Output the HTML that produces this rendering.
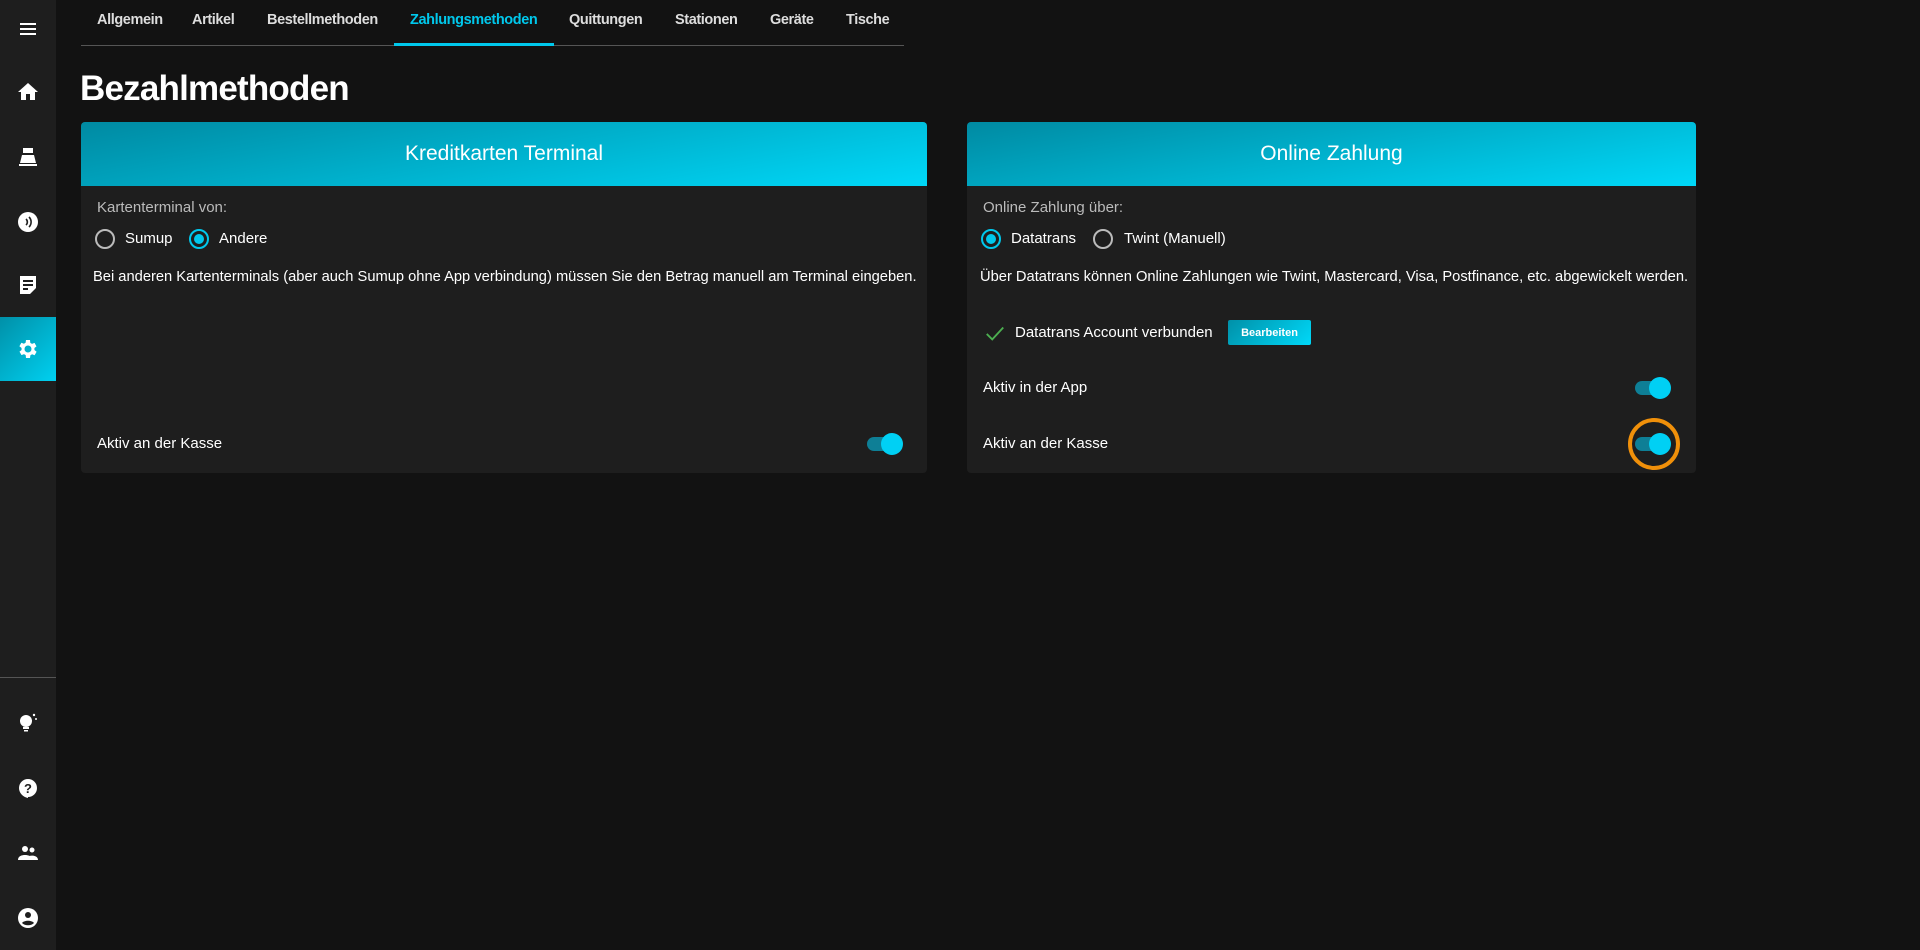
<!DOCTYPE html>
<html><head><meta charset="utf-8"><style>
*{box-sizing:border-box;margin:0;padding:0}
body{width:1920px;height:950px;background:#121212;font-family:"Liberation Sans",sans-serif;color:#fff;position:relative;overflow:hidden}
.side{position:absolute;left:0;top:0;width:56px;height:950px;background:#1e1e1e}
.ic{position:absolute;left:16px;width:24px;height:24px}
.act{position:absolute;left:0;top:317px;width:56px;height:64px;background:linear-gradient(135deg,#0090a8,#00d0f0)}
.div{position:absolute;left:0;top:677px;width:56px;height:1px;background:#555}
.tab{position:absolute;top:12px;font-size:14.5px;font-weight:bold;color:#ddd;letter-spacing:-0.4px}
.tabline{position:absolute;left:81px;top:45px;width:823px;height:1px;background:#555}
.uline{position:absolute;left:394px;top:43px;width:160px;height:3px;background:#00c8ec}
h1{position:absolute;left:80px;top:69px;font-size:35px;font-weight:bold;letter-spacing:-0.8px}
.card{position:absolute;top:122px;height:351px;background:#1e1e1e;border-radius:4px;overflow:hidden}
.hd{height:64px;background:linear-gradient(170deg,#008aa2,#00d8f8);display:flex;align-items:center;justify-content:center;font-size:21px}
.t{position:absolute;font-size:15px;white-space:nowrap}
.g{color:#bbb}
.rad{position:absolute;width:20px;height:20px;border:2px solid #bbb;border-radius:50%}
.rad.on{border-color:#00c8ec}
.rad.on::after{content:"";position:absolute;left:3px;top:3px;width:10px;height:10px;border-radius:50%;background:#00c8ec}
.tg{position:absolute;width:36px;height:22px}
.tg::before{content:"";position:absolute;left:0;top:4px;width:32px;height:14px;border-radius:7px;background:#0e7f96}
.tg::after{content:"";position:absolute;right:0;top:0;width:22px;height:22px;border-radius:50%;background:#00d0f4}
</style></head><body>
<div class="side">
<div class="ic" style="top:17px"><svg width="24" height="24" viewBox="0 0 24 24" fill="#fff"><rect x="4" y="6" width="16" height="2"/><rect x="4" y="11" width="16" height="2"/><rect x="4" y="16" width="16" height="2"/></svg></div>
<div class="ic" style="top:80px"><svg width="24" height="24" viewBox="0 0 24 24" fill="#fff"><path d="M10 20v-6h4v6h5v-8h3L12 3 2 12h3v8z"/></svg></div>
<div class="ic" style="top:145px"><svg width="24" height="24" viewBox="0 0 24 24" fill="#fff"><path d="M7 3h10v5H7zM6 10h12l2 8H4zM3 19h18v2H3z"/></svg></div>
<div class="ic" style="top:210px"><svg width="24" height="24" viewBox="0 0 24 24"><circle cx="12" cy="12" r="10" fill="#fff"/><path d="M10 9a4 4 0 010 6M13 7a7 7 0 010 10" stroke="#1e1e1e" stroke-width="1.6" fill="none"/></svg></div>
<div class="ic" style="top:273px"><svg width="24" height="24" viewBox="0 0 24 24" fill="#fff"><path d="M4 3h16v12l-6 6H4zM7 7h10v2H7zm0 4h10v2H7zm0 4h5v2H7z" fill-rule="evenodd"/></svg></div>
<div class="act"></div>
<div class="ic" style="top:337px"><svg width="24" height="24" viewBox="0 0 24 24" fill="#fff"><path d="M19.4 13a7.5 7.5 0 000-2l2.1-1.6-2-3.5-2.5 1a7 7 0 00-1.7-1L15 3h-4l-.4 2.7a7 7 0 00-1.7 1l-2.5-1-2 3.5L6.6 11a7.5 7.5 0 000 2l-2.1 1.6 2 3.5 2.5-1a7 7 0 001.7 1L11 21h4l.4-2.7a7 7 0 001.7-1l2.5 1 2-3.5zM13 15.5a3.5 3.5 0 110-7 3.5 3.5 0 010 7z" transform="translate(-1 0)"/></svg></div>
<div class="div"></div>
<div class="ic" style="top:710px"><svg width="24" height="24" viewBox="0 0 24 24" fill="#fff"><circle cx="10" cy="11" r="6"/><rect x="7" y="17" width="6" height="2"/><rect x="8" y="20" width="4" height="1.5"/><circle cx="18" cy="5" r="1.2"/><circle cx="20" cy="9" r="1"/></svg></div>
<div class="ic" style="top:777px"><svg width="24" height="24" viewBox="0 0 24 24"><path d="M12 2a9 9 0 00-9 9c0 5 4 9 9 10v-1a9 9 0 000-18z" fill="#fff"/><text x="12" y="16" font-size="13" font-weight="bold" text-anchor="middle" fill="#1e1e1e" font-family="Liberation Sans">?</text></svg></div>
<div class="ic" style="top:841px"><svg width="24" height="24" viewBox="0 0 24 24" fill="#fff"><circle cx="9" cy="8" r="3"/><circle cx="16" cy="9" r="2.5"/><path d="M2 19c0-4 4-5 7-5s7 1 7 5zM14 19c0-2 0-3-1-4 4-1 9 0 9 4z"/></svg></div>
<div class="ic" style="top:906px"><svg width="24" height="24" viewBox="0 0 24 24"><circle cx="12" cy="12" r="10" fill="#fff"/><circle cx="12" cy="9" r="3" fill="#1e1e1e"/><path d="M6 17c2-3 10-3 12 0-3 3-9 3-12 0z" fill="#1e1e1e"/></svg></div>
</div>
<div class="tab" style="left:97px">Allgemein</div>
<div class="tab" style="left:192px">Artikel</div>
<div class="tab" style="left:267px">Bestellmethoden</div>
<div class="tab" style="left:410px;color:#00c8ec">Zahlungsmethoden</div>
<div class="tab" style="left:569px">Quittungen</div>
<div class="tab" style="left:675px">Stationen</div>
<div class="tab" style="left:770px">Geräte</div>
<div class="tab" style="left:846px">Tische</div>
<div class="tabline"></div><div class="uline"></div>
<h1>Bezahlmethoden</h1>
<div class="card" style="left:81px;width:846px">
<div class="hd">Kreditkarten Terminal</div>
<div class="t g" style="left:16px;top:77px">Kartenterminal von:</div>
<div class="rad" style="left:14px;top:107px"></div><div class="t" style="left:44px;top:108px">Sumup</div>
<div class="rad on" style="left:108px;top:107px"></div><div class="t" style="left:138px;top:108px">Andere</div>
<div class="t" style="left:12px;top:147px;font-size:14.7px">Bei anderen Kartenterminals (aber auch Sumup ohne App verbindung) müssen Sie den Betrag manuell am Terminal eingeben.</div>
<div class="t" style="left:16px;top:313px">Aktiv an der Kasse</div>
<div class="tg" style="left:786px;top:311px"></div>
</div>
<div class="card" style="left:967px;width:729px">
<div class="hd">Online Zahlung</div>
<div class="t g" style="left:16px;top:77px">Online Zahlung über:</div>
<div class="rad on" style="left:14px;top:107px"></div><div class="t" style="left:44px;top:108px">Datatrans</div>
<div class="rad" style="left:126px;top:107px"></div><div class="t" style="left:157px;top:108px">Twint (Manuell)</div>
<div class="t" style="left:13px;top:147px;font-size:14.7px">Über Datatrans können Online Zahlungen wie Twint, Mastercard, Visa, Postfinance, etc. abgewickelt werden.</div>
<svg style="position:absolute;left:17px;top:200px" width="22" height="22" viewBox="0 0 24 24"><path d="M3 13l6 6L21 6" stroke="#4caf50" stroke-width="2" fill="none"/></svg>
<div class="t" style="left:48px;top:202px">Datatrans Account verbunden</div>
<div style="position:absolute;left:261px;top:198px;width:83px;height:25px;border-radius:2px;background:linear-gradient(135deg,#0090a8,#00d8f8);font-size:11px;font-weight:bold;display:flex;align-items:center;justify-content:center">Bearbeiten</div>
<div class="t" style="left:16px;top:257px">Aktiv in der App</div>
<div class="tg" style="left:668px;top:255px"></div>
<div class="t" style="left:16px;top:313px">Aktiv an der Kasse</div>
<div class="tg" style="left:668px;top:311px"></div>
<div style="position:absolute;left:661px;top:296px;width:52px;height:52px;border:4px solid #f0900a;border-radius:50%"></div>
</div>
</body></html>
